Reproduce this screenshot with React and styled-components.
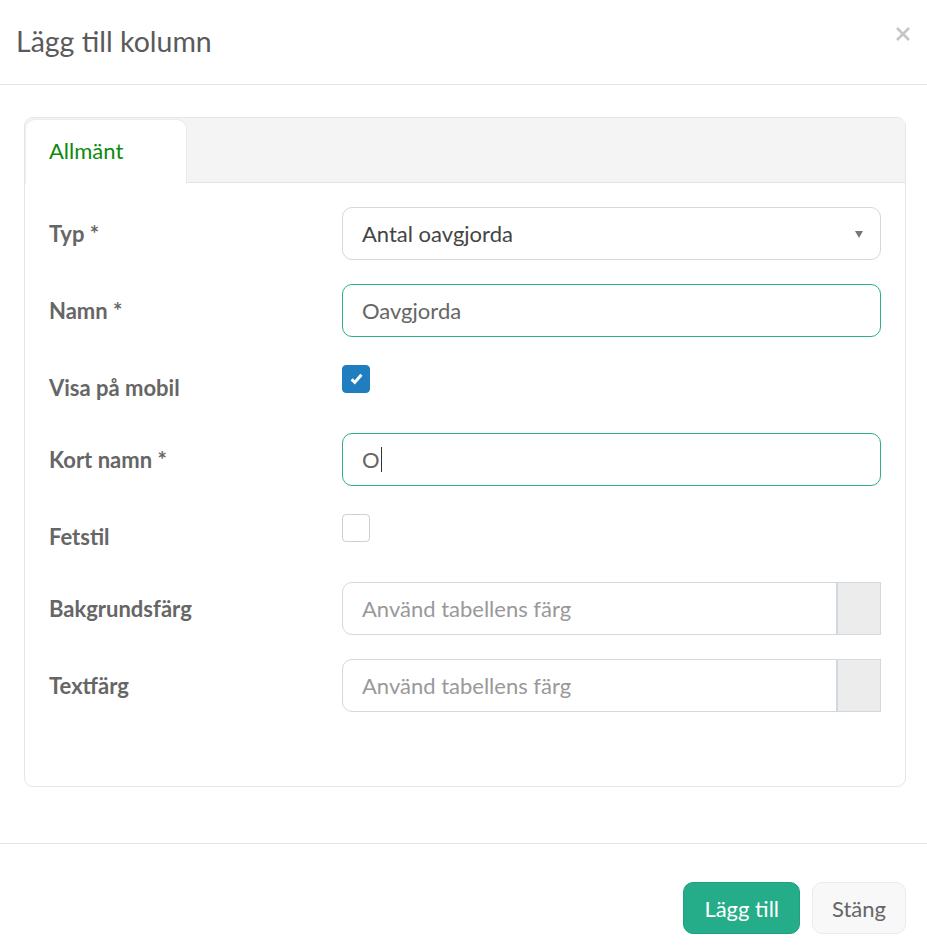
import React from "react";
import styled, { createGlobalStyle } from "styled-components";

const Global = createGlobalStyle`
  html, body {
    margin: 0;
    padding: 0;
    background: #fff;
  }
  body {
    font-family: Lato, "Open Sans", "Liberation Sans", sans-serif;
    color: #555;
  }
  * { box-sizing: border-box; }
`;

const Modal = styled.div`
  width: 927px;
  background: #fff;
`;

const Header = styled.div`
  height: 85px;
  display: flex;
  align-items: center;
  justify-content: space-between;
  padding: 0 16px 2px 16px;
  border-bottom: 1px solid #e5e5e5;
`;

const Title = styled.h4`
  margin: 0;
  font-size: 28.5px;
  font-weight: 400;
  color: #5a5a5a;
`;

const Close = styled.button`
  border: 0;
  background: none;
  padding: 0;
  width: 16px;
  height: 16px;
  margin-top: -14px;
  cursor: pointer;
  display: flex;
  align-items: center;
  justify-content: center;
`;

const Body = styled.div`
  padding: 32px 21px 56px 24px;
`;

const Card = styled.div`
  border: 1px solid #e6e6e6;
  border-radius: 9px;
  overflow: hidden;
`;

const TabBar = styled.div`
  display: flex;
  height: 65px;
  background: #f4f4f4;
  border-bottom: 1px solid #e4e4e4;
`;

const Tab = styled.div`
  width: 162px;
  height: 65px;
  margin-top: 1px;
  background: ${({ active }) => (active ? "#fff" : "transparent")};
  border-radius: 10px 10px 0 0;
  border: 1px solid ${({ active }) => (active ? "#ececec" : "transparent")};
  border-bottom: 0;
  color: ${({ active }) => (active ? "#0b8a0b" : "#666")};
  font-size: 22px;
  padding: 17px 0 0 23px;
`;

const Form = styled.div`
  display: flex;
  flex-direction: column;
  gap: 24px;
  padding: 24px 24px 74px 24px;
`;

const Row = styled.div`
  display: grid;
  grid-template-columns: 293px 1fr;
  min-height: ${({ check }) => (check ? "48px" : "53px")};
`;

const Label = styled.div`
  font-size: 22px;
  font-weight: 700;
  color: #666;
  display: flex;
  align-items: center;
  padding-top: ${({ check }) => (check ? "5px" : "0")};
`;

const Field = styled.div`
  height: 53px;
  display: flex;
  align-items: center;
  padding: 0 19px;
  border: 1px solid ${({ focus }) => (focus ? "#2bb08a" : "#d0d9e2")};
  border-radius: ${({ addon }) => (addon ? "10px 0 0 10px" : "10px")};
  font-size: 22px;
  color: ${({ tone }) => tone || "#555"};
  position: relative;
  flex: 1;
`;

const Arrow = styled.span`
  position: absolute;
  right: 17px;
  top: 23px;
  width: 0;
  height: 0;
  border-left: 4px solid transparent;
  border-right: 4px solid transparent;
  border-top: 7px solid #777;
`;

const Caret = styled.span`
  display: inline-block;
  width: 1px;
  height: 25px;
  background: #333;
  margin-left: 1px;
`;

const Group = styled.div`
  display: flex;
`;

const Swatch = styled.div`
  width: 45px;
  height: 53px;
  background: #ececec;
  border: 1px solid #d0d9e2;
  border-left-width: 2px;
  margin-left: -1px;
`;

const Check = styled.div`
  width: 28px;
  height: 28px;
  margin-top: 4px;
  border-radius: 4px;
  border: 1px solid ${({ checked }) => (checked ? "#1f7dc0" : "#cfcfcf")};
  background: ${({ checked }) => (checked ? "#1f7dc0" : "#fff")};
  display: flex;
  align-items: center;
  justify-content: center;
`;

const Footer = styled.div`
  border-top: 1px solid #e5e5e5;
  display: flex;
  justify-content: flex-end;
  gap: 12px;
  padding: 38px 21px 13px 0;
`;

const Button = styled.button`
  height: 52px;
  padding: 0 ${({ primary }) => (primary ? "20px" : "19px")};
  border-radius: 10px;
  font-family: inherit;
  font-size: 22px;
  border: 1px solid ${({ primary }) => (primary ? "#1fa17e" : "#ebebeb")};
  background: ${({ primary }) => (primary ? "#24ad88" : "#f8f8f8")};
  color: ${({ primary }) => (primary ? "#fff" : "#666")};
  cursor: pointer;
`;

export default function App() {
  return (
    <Modal>
      <Global />
      <Header>
        <Title>Lägg till kolumn</Title>
        <Close aria-label="Stäng">
          <svg width="14" height="14" viewBox="0 0 14 14">
            <path d="M1 1L13 13M13 1L1 13" stroke="#c6c6c6" strokeWidth="2.6" />
          </svg>
        </Close>
      </Header>
      <Body>
        <Card>
          <TabBar>
            <Tab active>Allmänt</Tab>
          </TabBar>
          <Form>
            <Row>
              <Label>Typ *</Label>
              <Field tone="#444">
                Antal oavgjorda
                <Arrow />
              </Field>
            </Row>
            <Row>
              <Label>Namn *</Label>
              <Field focus tone="#666">Oavgjorda</Field>
            </Row>
            <Row check>
              <Label check>Visa på mobil</Label>
              <div>
                <Check checked>
                  <svg width="13" height="12" viewBox="0 0 13 12">
                    <path d="M1.6 6.4L4.8 9.4L11.4 1.8" fill="none" stroke="#fff" strokeWidth="3" />
                  </svg>
                </Check>
              </div>
            </Row>
            <Row>
              <Label>Kort namn *</Label>
              <Field focus tone="#666">
                O<Caret />
              </Field>
            </Row>
            <Row check>
              <Label check>Fetstil</Label>
              <div>
                <Check />
              </div>
            </Row>
            <Row>
              <Label>Bakgrundsfärg</Label>
              <Group>
                <Field addon tone="#999">Använd tabellens färg</Field>
                <Swatch />
              </Group>
            </Row>
            <Row>
              <Label>Textfärg</Label>
              <Group>
                <Field addon tone="#999">Använd tabellens färg</Field>
                <Swatch />
              </Group>
            </Row>
          </Form>
        </Card>
      </Body>
      <Footer>
        <Button primary>Lägg till</Button>
        <Button>Stäng</Button>
      </Footer>
    </Modal>
  );
}
